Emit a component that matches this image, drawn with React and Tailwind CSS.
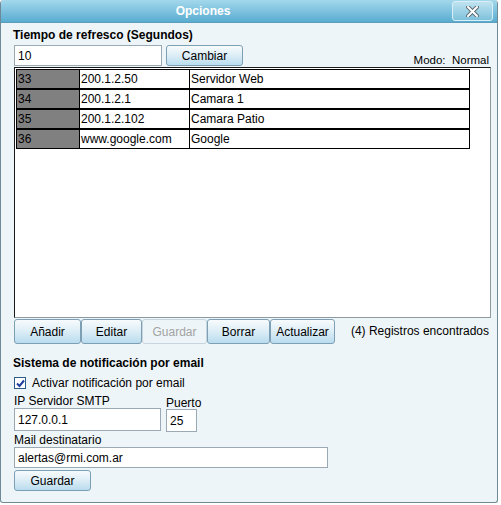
const rows = [
  { id: '33', host: '200.1.2.50', name: 'Servidor Web' },
  { id: '34', host: '200.1.2.1', name: 'Camara 1' },
  { id: '35', host: '200.1.2.102', name: 'Camara Patio' },
  { id: '36', host: 'www.google.com', name: 'Google' },
];

const btn =
  'h-full border border-[#7d9fb4] rounded-[3px] bg-gradient-to-b from-[#f7fbfd] via-[#dcedf6] to-[#b9dcee] text-[12px] text-black';

function Field({ value, className }) {
  return (
    <div
      className={`border border-[#9aa9b3] bg-white px-[3px] flex items-center text-[12px] ${className}`}
    >
      {value}
    </div>
  );
}

export default function App() {
  return (
    <div className="w-[501px] h-[505px] bg-white font-['Liberation_Sans',sans-serif] text-black">
      <div className="w-[498px] h-[503px] flex flex-col border border-[#6f8a96] border-t-0 rounded-t-[4px] rounded-b-[3px] bg-[#eef5f8] overflow-hidden">
        {/* title bar */}
        <div className="h-[23px] flex items-center relative bg-gradient-to-b from-[#a3d8ec] to-[#58acd0] border-b border-[#5d9fba]">
          <div className="flex-1 text-center text-white font-bold text-[12px] pr-[92px]">Opciones</div>
          <div className="absolute right-[4px] top-[1px] w-[41px] h-[20px] border border-[#d9eef6] rounded-[3px] bg-gradient-to-b from-[#bfe3f0] to-[#7ec2dc] flex items-center justify-center">
            <svg width="13" height="11" viewBox="0 0 13 11">
              <path d="M2 1 L11 10 M11 1 L2 10" stroke="#5a6a72" strokeWidth="4" strokeLinecap="square" />
              <path d="M2 1 L11 10 M11 1 L2 10" stroke="#ffffff" strokeWidth="2" strokeLinecap="square" />
            </svg>
          </div>
        </div>

        <div className="flex-1 flex flex-col pl-[12px] pr-[7px]">
          <div className="mt-[5px] font-bold text-[12px] leading-[14px]">Tiempo de refresco (Segundos)</div>
          <div className="mt-[3px] h-[21px] flex items-stretch">
            <Field value="10" className="ml-[1px] w-[148px]" />
            <button className={`${btn} ml-[4px] w-[77px]`}>Cambiar</button>
            <div className="flex-1 flex items-end justify-end text-[11.5px] leading-[11px] pr-[1px]">Modo:&nbsp; Normal</div>
          </div>

          {/* list box */}
          <div className="mt-[1px] ml-[1px] w-[477px] h-[251px] bg-white border border-[#1a1a1a] border-r-[#8d9aa0] border-b-[#8d9aa0] p-px">
            <table className="w-[454px] border-collapse text-[12px]">
              <tbody>
                {rows.map((r, i) => (
                  <tr key={r.id} className="h-[19px]">
                    <td
                      className={`w-[63px] bg-[#808080] border-x border-black pl-[1px] ${i === 0 ? 'border-t' : 'border-t-2'} ${i === rows.length - 1 ? 'border-b' : ''}`}
                    >
                      {r.id}
                    </td>
                    <td
                      className={`w-[110px] border-x border-black pl-[1px] ${i === 0 ? 'border-t' : 'border-t-2'} ${i === rows.length - 1 ? 'border-b' : ''}`}
                    >
                      {r.host}
                    </td>
                    <td
                      className={`border-x border-black pl-[1px] ${i === 0 ? 'border-t' : 'border-t-2'} ${i === rows.length - 1 ? 'border-b' : ''}`}
                    >
                      {r.name}
                    </td>
                  </tr>
                ))}
              </tbody>
            </table>
          </div>

          {/* actions */}
          <div className="mt-[1px] ml-[1px] h-[25px] flex items-stretch">
            <button className={`${btn} w-[67px]`}>Añadir</button>
            <button className={`${btn} w-[61px]`}>Editar</button>
            <button className="h-full w-[65px] border border-[#c7d6de] rounded-[3px] bg-[#eef5f8] text-[12px] text-[#a3a3a3]">
              Guardar
            </button>
            <button className={`${btn} w-[63px]`}>Borrar</button>
            <button className={`${btn} w-[65px]`}>Actualizar</button>
            <div className="flex-1 text-right text-[12px] pt-[3px] pr-[1px]">(4) Registros encontrados</div>
          </div>

          <div className="mt-[12px] font-bold text-[12px] leading-[14px]">Sistema de notificación por email</div>
          <div className="mt-[6px] flex items-center h-[14px]">
            <div className="w-[12px] h-[12px] ml-[1px] border border-[#2a5d8a] bg-white flex items-center justify-center">
              <svg width="9" height="9" viewBox="0 0 9 9">
                <path d="M1 4.5 L3.5 7 L8 1.5" stroke="#1b3f9c" strokeWidth="2" fill="none" />
              </svg>
            </div>
            <span className="ml-[6px] text-[12px]">Activar notificación por email</span>
          </div>

          <div className="mt-[4px] flex">
            <div className="flex flex-col">
              <div className="text-[12px] leading-[14px] ml-[1px]">IP Servidor SMTP</div>
              <Field value="127.0.0.1" className="h-[23px] w-[147px] ml-[1px]" />
            </div>
            <div className="flex flex-col ml-[5px] pt-[3px]">
              <div className="text-[12px] leading-[12px]">Puerto</div>
              <Field value="25" className="h-[23px] w-[31px]" />
            </div>
          </div>

          <div className="mt-[2px] text-[12px] leading-[13px] ml-[1px]">Mail destinatario</div>
          <Field value="alertas@rmi.com.ar" className="h-[21px] w-[314px] ml-[1px]" />
          <button className={`${btn} mt-[2px] ml-[1px] !h-[21px] w-[77px]`}>Guardar</button>
        </div>
      </div>
    </div>
  );
}
